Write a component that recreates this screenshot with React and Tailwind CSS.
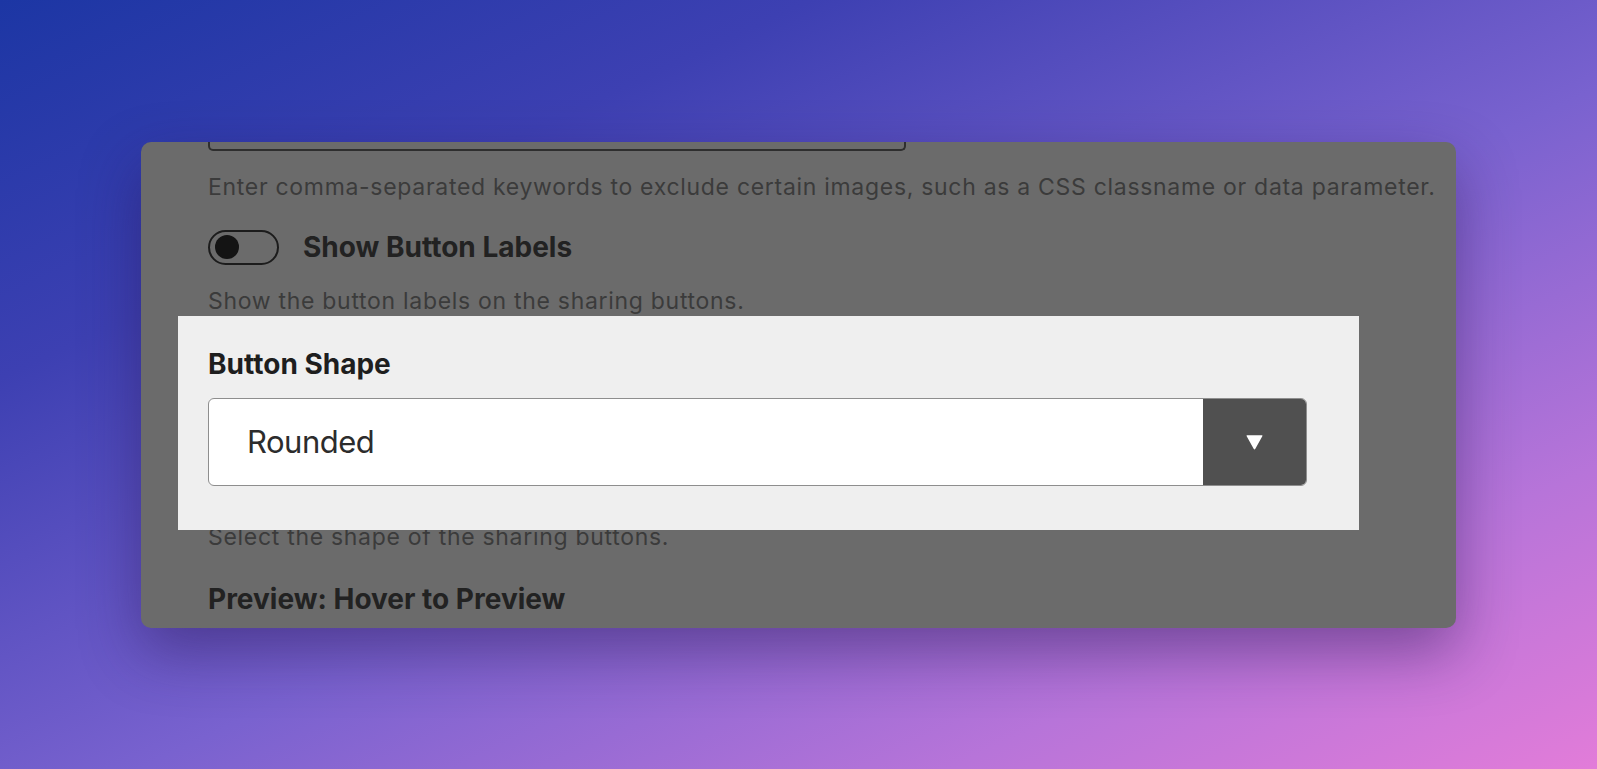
export default function App() {
  return (
    <div className="min-h-screen w-full flex items-center justify-center bg-[linear-gradient(155deg,#1c36a4_0%,#3d40b2_25%,#7962cf_55%,#b774d9_80%,#e27cd9_100%)] font-['Inter',sans-serif]">
      {/* Settings panel, dimmed except for the highlighted field */}
      <div className="w-[1315px] h-[486px] overflow-hidden rounded-[10px] bg-[#6b6b6b] shadow-[0_24px_60px_rgba(40,20,80,0.45)] pl-[67px]">
        {/* bottom edge of the keywords input above */}
        <div className="w-[698px] h-[9px] border-x-2 border-b-2 border-[#2e2e2e] rounded-b-[5px]" />

        <p className="mt-[21px] text-[23px] leading-[30px] tracking-[0.7px] text-[#3b3b3b] whitespace-nowrap">
          Enter comma-separated keywords to exclude certain images, such as a CSS classname or data parameter.
        </p>

        <div className="mt-[28px] flex items-center gap-[24px]">
          <div className="w-[71px] h-[35px] rounded-full border-2 border-[#1c1c1c] flex items-center pl-[5px]">
            <div className="w-[24px] h-[24px] rounded-full bg-[#141414]" />
          </div>
          <span className="text-[28px] leading-[32px] font-bold text-[#222]">Show Button Labels</span>
        </div>

        <p className="mt-[21px] text-[23px] leading-[30px] tracking-[0.7px] text-[#3b3b3b]">
          Show the button labels on the sharing buttons.
        </p>

        <div className="relative z-10 -ml-[30px] w-[1181px] bg-[#efefef] pl-[30px] pt-[32px] pb-[44px]">
          <div className="text-[28px] leading-[32px] font-bold text-[#1e1e1e]">Button Shape</div>
          <div className="mt-[18px] w-[1099px] h-[88px] flex rounded-[6px] overflow-hidden border-[1.5px] border-[#8e8e8e] bg-white">
            <div className="flex-1 flex items-center pl-[38px] text-[31px] leading-[40px] tracking-[-0.5px] text-[#2c2c2c]">Rounded</div>
            <div className="w-[103px] bg-[#505050] flex items-center justify-center">
              <svg width="19" height="18" viewBox="0 0 18 17">
                <path d="M2 2 H16 Q17 2 16.4 3 L9.8 15 Q9 16.3 8.2 15 L1.6 3 Q1 2 2 2 Z" fill="#fff" />
              </svg>
            </div>
          </div>
        </div>

        <p className="-mt-[8px] text-[23px] leading-[30px] tracking-[0.7px] text-[#3b3b3b]">
          Select the shape of the sharing buttons.
        </p>

        <div className="mt-[31px] text-[28px] leading-[32px] font-bold text-[#222]">Preview: Hover to Preview</div>
      </div>
    </div>
  );
}
